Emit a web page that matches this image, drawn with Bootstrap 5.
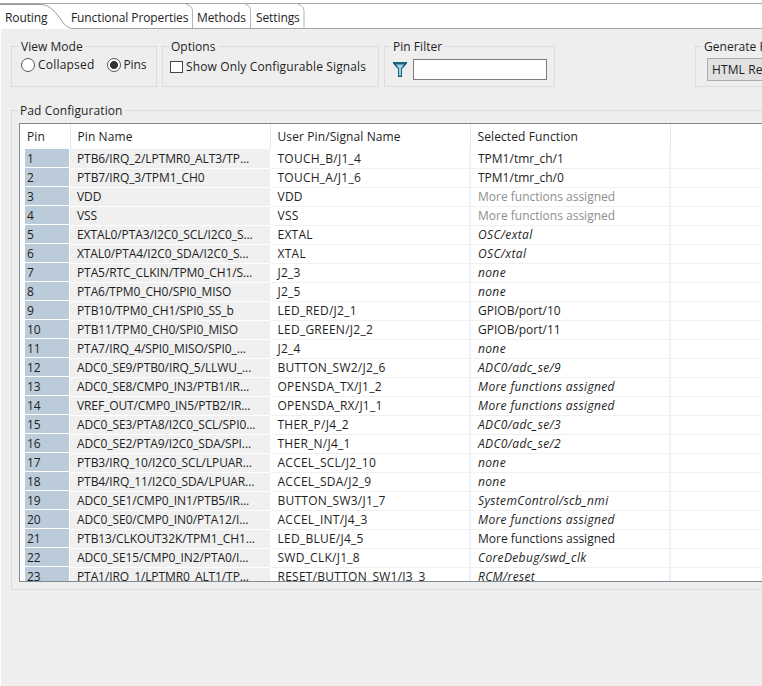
<!DOCTYPE html>
<html lang="en"><head><meta charset="utf-8">
<link href="https://cdn.jsdelivr.net/npm/bootstrap@5.3.0/dist/css/bootstrap.min.css" rel="stylesheet">
<style>
html,body{height:100%;overflow:hidden}
body{width:762px;height:686px;background:#fff;font-family:"Open Sans","Noto Sans",sans-serif;font-size:12px;color:#1e1e1e;letter-spacing:-.1px}
.topstrip{height:3px;background:#fff}
.tabbar{position:relative;height:26px;background:#fff}
.tabcurve{position:absolute;left:0;top:0}
.tabitem{position:relative;line-height:20px;padding-top:5px;height:25px}
.t1{width:71px;padding-left:5px}.t2{width:126px}.t3{width:59px}.t4{width:52px}
.panel{height:657px;background:#eee;margin-left:1px;width:900px;position:relative}
.grouprow{padding:17px 0 0 10px;height:81px;gap:5px;letter-spacing:.03px}
.grp{position:relative;border:1px solid #dcdcdc;height:41px}
.grp>.lgd{position:absolute;left:6px;top:-8px;background:#eee;padding:0 2px;line-height:16px;white-space:nowrap}
.g1>.lgd{left:7px}
.g1{width:146px}.g2{width:217px}.g3{width:171px;margin-right:135px}.g4{width:180px}
.gctl{padding-top:10px;line-height:16px;letter-spacing:.2px}
.radio{display:inline-block;width:14px;height:14px;border:1px solid #555;border-radius:50%;background:#fff;flex:none}
.radio.on{background:radial-gradient(circle,#333 0 3.6px,#fff 4.4px)}
.rfirst{margin-left:9px;margin-right:3px}.rsecond{margin-left:13px;margin-right:2px}
.pinslbl{letter-spacing:-.1px}
.chkrow{padding:12px 0 0 7px;line-height:16px;letter-spacing:.13px}
.chk{display:inline-block;width:13px;height:12px;border:1px solid #444;background:#fff;flex:none;margin-right:3px}
.filterrow{padding:12px 0 0 8px;gap:6px}
.finput{width:134px;height:21px;border:1px solid #7a7a7a;background:#fff}
.btnrow{padding:11px 0 0 11px}
.rptbtn{display:block;width:120px;height:23px;border:1px solid #adadad;background:#e1e1e1;line-height:21px;padding-left:4px;white-space:nowrap;letter-spacing:.1px}
.padgrp{position:relative;margin-left:10px;width:880px;height:480px;border:1px solid #dcdcdc}
.padgrp>.lgd{position:absolute;left:6px;top:-8px;background:#eee;padding:0 2px;line-height:16px;letter-spacing:.1px}
.tblwrap{margin:12px 0 0 7px;width:860px;height:459px;border:1px solid #7f8a92;border-width:1px 0 1px 1px;background:#fff;overflow:hidden}
table.pins{table-layout:fixed;width:850px;margin:0;border-collapse:collapse;--bs-table-bg:transparent;color:#1e1e1e}
table.pins th,table.pins td{padding:0 0 0 7px;height:19px;line-height:17px;font-weight:400;white-space:nowrap;overflow:hidden;border:0;border-bottom:1px solid #f0f0f0;border-right:2px solid #eef2f8;font-size:12px;color:inherit;box-shadow:none;vertical-align:middle}
table.pins th{height:25px;padding:0 0 0 7px;line-height:24px;border-bottom:0;border-right:1px solid #e6e6e6;letter-spacing:.1px}
.cp{width:50px}.cn{width:200px}.cu{width:200px}.cs{width:200px}
table.pins td:first-child{padding:0;border-right:0;border-bottom:0;background:#fff}
.pinno{display:block;margin-left:5px;width:44px;height:18px;line-height:17px;padding:1px 0 0 2px;background:#bccbda;margin-bottom:1px;letter-spacing:0}
table.pins td.nm{background:#f0f0f0;border-bottom:1px solid #fff;border-right:1px solid #fff}
table.pins td.sg{letter-spacing:.25px}
table.pins td.fn{letter-spacing:0}
table.pins td.mute{color:#8e8e8e}
table.pins td.it{font-style:italic;letter-spacing:.35px}
</style></head><body>
<div class="topstrip"></div>
<div class="tabbar d-flex">
<svg class="tabcurve" width="762" height="26" viewBox="0 0 762 26"><path d="M0 .5H762M72 25.500H762" fill="none" stroke="#a6a6a6"/><path d="M0 1.500H41C50 1.500 56 10 62 18C65 23 69 25.500 73 25.500" fill="none" stroke="#999"/><path d="M186 1.500Q192 2 192.500 8V25M245 1.500Q250.500 2 250.500 8V25M298 1.500Q303.500 2 304 8V25" fill="none" stroke="#b5b5b5"/></svg>
<div class="tabitem t1">Routing</div>
<div class="tabitem t2">Functional Properties</div>
<div class="tabitem t3">Methods</div>
<div class="tabitem t4">Settings</div>
</div>
<div class="panel">
<div class="grouprow d-flex">
<div class="grp g1"><span class="lgd">View Mode</span>
<div class="gctl d-flex align-items-center"><span class="radio rfirst"></span><span>Collapsed</span><span class="radio on rsecond"></span><span class="pinslbl">Pins</span></div></div>
<div class="grp g2"><span class="lgd">Options</span>
<div class="chkrow d-flex align-items-center"><span class="chk"></span><span>Show Only Configurable Signals</span></div></div>
<div class="grp g3"><span class="lgd">Pin Filter</span>
<div class="filterrow d-flex align-items-center"><svg width="14" height="15" viewBox="0 0 14 15"><path d="M0 0H14V1.500L9 7V15H5V7L0 1.500Z" fill="#14607f"/><path d="M3 2.500H11L8 6.500V13.500H6V6.500Z" fill="#9fd4e4"/></svg><span class="finput"></span></div></div>
<div class="grp g4"><span class="lgd">Generate Report</span>
<div class="btnrow"><span class="rptbtn">HTML Report</span></div></div>
</div>
<div class="padgrp"><span class="lgd">Pad Configuration</span>
<div class="tblwrap">
<table class="table pins">
<colgroup><col class="cp"><col class="cn"><col class="cu"><col class="cs"><col></colgroup>
<thead><tr><th>Pin</th><th>Pin Name</th><th>User Pin/Signal Name</th><th>Selected Function</th><th></th></tr></thead>
<tbody>
<tr><td><span class="pinno">1</span></td><td class="nm">PTB6/IRQ_2/LPTMR0_ALT3/TP...</td><td class="sg">TOUCH_B/J1_4</td><td class="fn">TPM1/tmr_ch/1</td><td></td></tr>
<tr><td><span class="pinno">2</span></td><td class="nm">PTB7/IRQ_3/TPM1_CH0</td><td class="sg">TOUCH_A/J1_6</td><td class="fn">TPM1/tmr_ch/0</td><td></td></tr>
<tr><td><span class="pinno">3</span></td><td class="nm">VDD</td><td class="sg">VDD</td><td class="fn mute">More functions assigned</td><td></td></tr>
<tr><td><span class="pinno">4</span></td><td class="nm">VSS</td><td class="sg">VSS</td><td class="fn mute">More functions assigned</td><td></td></tr>
<tr><td><span class="pinno">5</span></td><td class="nm">EXTAL0/PTA3/I2C0_SCL/I2C0_S...</td><td class="sg">EXTAL</td><td class="it">OSC/extal</td><td></td></tr>
<tr><td><span class="pinno">6</span></td><td class="nm">XTAL0/PTA4/I2C0_SDA/I2C0_S...</td><td class="sg">XTAL</td><td class="it">OSC/xtal</td><td></td></tr>
<tr><td><span class="pinno">7</span></td><td class="nm">PTA5/RTC_CLKIN/TPM0_CH1/S...</td><td class="sg">J2_3</td><td class="it">none</td><td></td></tr>
<tr><td><span class="pinno">8</span></td><td class="nm">PTA6/TPM0_CH0/SPI0_MISO</td><td class="sg">J2_5</td><td class="it">none</td><td></td></tr>
<tr><td><span class="pinno">9</span></td><td class="nm">PTB10/TPM0_CH1/SPI0_SS_b</td><td class="sg">LED_RED/J2_1</td><td class="fn">GPIOB/port/10</td><td></td></tr>
<tr><td><span class="pinno">10</span></td><td class="nm">PTB11/TPM0_CH0/SPI0_MISO</td><td class="sg">LED_GREEN/J2_2</td><td class="fn">GPIOB/port/11</td><td></td></tr>
<tr><td><span class="pinno">11</span></td><td class="nm">PTA7/IRQ_4/SPI0_MISO/SPI0_...</td><td class="sg">J2_4</td><td class="it">none</td><td></td></tr>
<tr><td><span class="pinno">12</span></td><td class="nm">ADC0_SE9/PTB0/IRQ_5/LLWU_...</td><td class="sg">BUTTON_SW2/J2_6</td><td class="it">ADC0/adc_se/9</td><td></td></tr>
<tr><td><span class="pinno">13</span></td><td class="nm">ADC0_SE8/CMP0_IN3/PTB1/IR...</td><td class="sg">OPENSDA_TX/J1_2</td><td class="it">More functions assigned</td><td></td></tr>
<tr><td><span class="pinno">14</span></td><td class="nm">VREF_OUT/CMP0_IN5/PTB2/IR...</td><td class="sg">OPENSDA_RX/J1_1</td><td class="it">More functions assigned</td><td></td></tr>
<tr><td><span class="pinno">15</span></td><td class="nm">ADC0_SE3/PTA8/I2C0_SCL/SPI0...</td><td class="sg">THER_P/J4_2</td><td class="it">ADC0/adc_se/3</td><td></td></tr>
<tr><td><span class="pinno">16</span></td><td class="nm">ADC0_SE2/PTA9/I2C0_SDA/SPI...</td><td class="sg">THER_N/J4_1</td><td class="it">ADC0/adc_se/2</td><td></td></tr>
<tr><td><span class="pinno">17</span></td><td class="nm">PTB3/IRQ_10/I2C0_SCL/LPUAR...</td><td class="sg">ACCEL_SCL/J2_10</td><td class="it">none</td><td></td></tr>
<tr><td><span class="pinno">18</span></td><td class="nm">PTB4/IRQ_11/I2C0_SDA/LPUAR...</td><td class="sg">ACCEL_SDA/J2_9</td><td class="it">none</td><td></td></tr>
<tr><td><span class="pinno">19</span></td><td class="nm">ADC0_SE1/CMP0_IN1/PTB5/IR...</td><td class="sg">BUTTON_SW3/J1_7</td><td class="it">SystemControl/scb_nmi</td><td></td></tr>
<tr><td><span class="pinno">20</span></td><td class="nm">ADC0_SE0/CMP0_IN0/PTA12/I...</td><td class="sg">ACCEL_INT/J4_3</td><td class="it">More functions assigned</td><td></td></tr>
<tr><td><span class="pinno">21</span></td><td class="nm">PTB13/CLKOUT32K/TPM1_CH1...</td><td class="sg">LED_BLUE/J4_5</td><td class="fn">More functions assigned</td><td></td></tr>
<tr><td><span class="pinno">22</span></td><td class="nm">ADC0_SE15/CMP0_IN2/PTA0/I...</td><td class="sg">SWD_CLK/J1_8</td><td class="it">CoreDebug/swd_clk</td><td></td></tr>
<tr><td><span class="pinno">23</span></td><td class="nm">PTA1/IRQ_1/LPTMR0_ALT1/TP...</td><td class="sg">RESET/BUTTON_SW1/J3_3</td><td class="it">RCM/reset</td><td></td></tr>
</tbody></table>
</div></div>
</div>
<script src="https://cdn.jsdelivr.net/npm/bootstrap@5.3.0/dist/js/bootstrap.bundle.min.js"></script>
</body></html>
